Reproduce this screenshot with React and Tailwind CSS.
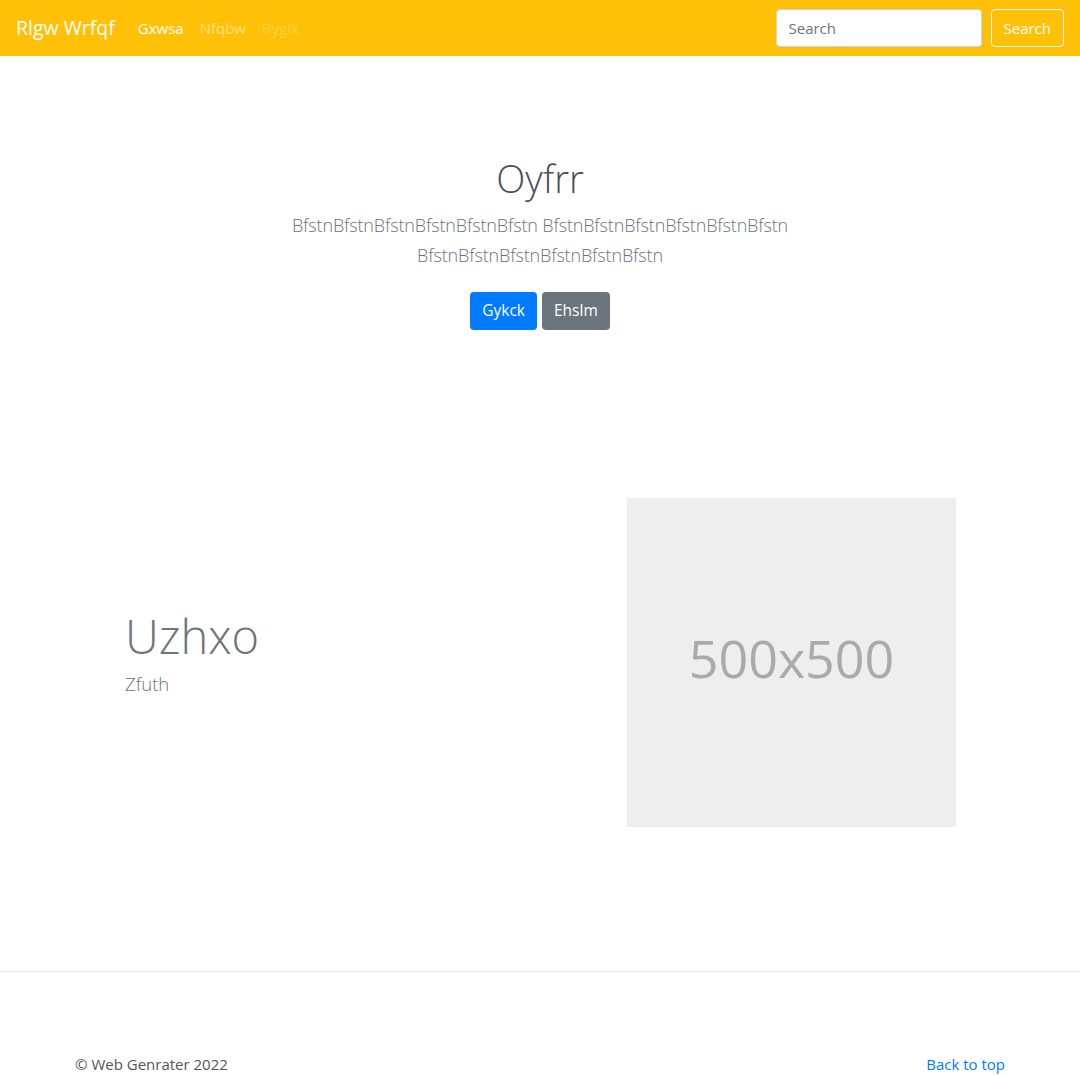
import React from "react";

const font = { fontFamily: '"Open Sans", "Noto Sans", sans-serif' };

export default function App() {
  return (
    <div className="min-h-[1076px] bg-white text-[#212529]" style={font}>
      <nav className="h-14 bg-[#ffc107] flex items-center px-4">
        <a className="text-[19.5px] text-white mr-[15px] leading-[30px]">Rlgw Wrfqf</a>
        <ul className="flex items-center text-[15px]">
          <li className="px-2 text-white">Gxwsa</li>
          <li className="px-2 text-white/50">Nfqbw</li>
          <li className="px-2 text-white/25">Byglx</li>
        </ul>
        <form className="ml-auto flex items-center">
          <input
            placeholder="Search"
            className="w-[206px] h-[38px] px-3 bg-white border border-[#ced4da] rounded text-[15px] placeholder:text-[#6c757d] outline-none"
          />
          <button className="ml-[9px] h-[38px] px-3 border border-[#f8f9fa] rounded text-white text-[15px]">
            Search
          </button>
        </form>
      </nav>

      <section className="text-center pt-[98px]">
        <div className="max-w-[640px] mx-auto px-[15px]">
          <h1 className="text-[38px] font-light leading-[48px] text-[#4a4f55] mb-2">Oyfrr</h1>
          <p className="text-[18px] tracking-[-0.15px] font-light leading-[30px] text-[#6c757d] mb-[22px]">
            BfstnBfstnBfstnBfstnBfstnBfstn BfstnBfstnBfstnBfstnBfstnBfstn BfstnBfstnBfstnBfstnBfstnBfstn
          </p>
          <div className="flex justify-center gap-[5px]">
            <a className="h-[38px] px-3 flex items-center rounded bg-[#007bff] text-white text-[15.5px]">Gykck</a>
            <a className="h-[38px] px-3 flex items-center rounded bg-[#6c757d] text-white text-[15.5px]">Ehslm</a>
          </div>
        </div>
      </section>

      <section className="mt-[168px] max-w-[960px] mx-auto px-[15px]">
        <div className="flex items-center">
          <div className="flex-1 pl-[50px] mb-[14px]">
            <h2 className="text-[47px] font-light leading-none text-[#6c757d]">Uzhxo</h2>
            <p className="text-[18.5px] font-light leading-[30px] text-[#6c757d] mt-[9px]">Zfuth</p>
          </div>
          <div className="w-[329px] h-[329px] bg-[#eeeeee] flex items-center justify-center mr-[49px]">
            <span className="text-[52px] text-[#aaaaaa] mb-[9px]">500x500</span>
          </div>
        </div>
      </section>

      <hr className="mt-[144px] border-0 border-t border-[#e5e5e5]" />

      <footer className="max-w-[960px] mx-auto px-[15px] pt-[80px] flex justify-between text-[15px] leading-6">
        <p className="text-[#555]">© Web Genrater 2022</p>
        <a className="text-[#007bff]">Back to top</a>
      </footer>
    </div>
  );
}
